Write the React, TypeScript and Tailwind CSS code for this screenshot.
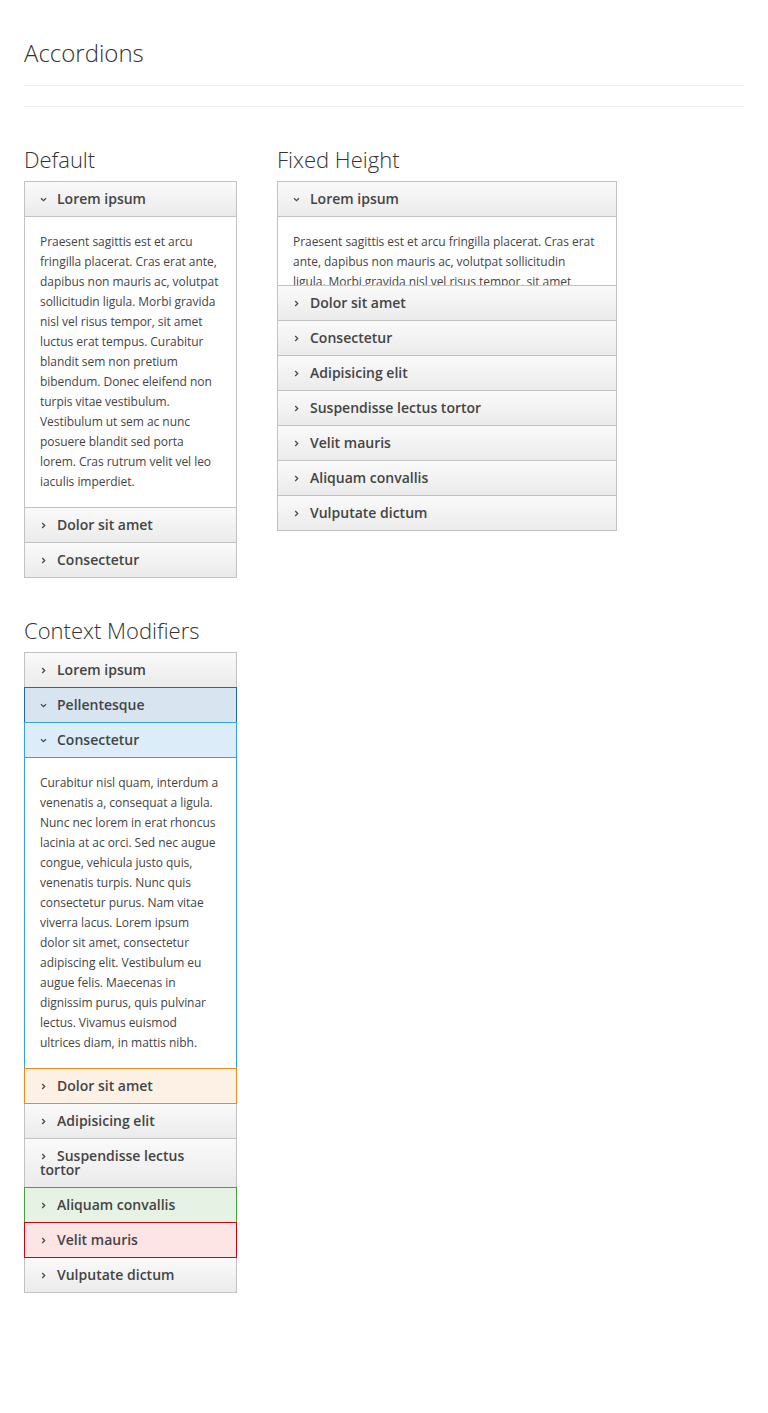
import React from "react";

type Variant = "default" | "primary" | "info" | "warning" | "success" | "danger";

const headerCls: Record<Variant, string> = {
  default: "border-[#c2c2c2] bg-gradient-to-b from-[#fafafa] to-[#ebebeb]",
  primary: "border-[#1f6aa8] bg-[#d9e4f1] relative z-10",
  info: "border-[#34a4e0] bg-[#dcedf9] relative z-10",
  warning: "border-[#f0891c] bg-[#fdf1e5] relative z-10",
  success: "border-[#46a33a] bg-[#e6f2e3] relative z-10",
  danger: "border-[#d6000f] bg-[#fde5e5] relative z-10",
};

const contentCls: Record<Variant, string> = {
  default: "border-[#c2c2c2]",
  primary: "border-[#1f6aa8]",
  info: "border-[#34a4e0] relative z-10",
  warning: "border-[#f0891c]",
  success: "border-[#46a33a]",
  danger: "border-[#d6000f]",
};

function Chevron({ open }: { open: boolean }) {
  return (
    <svg
      width="7"
      height="7"
      viewBox="0 0 7 7"
      className="inline-block mr-[10px] align-[1px]"
      fill="none"
      stroke="#4a4a4a"
      strokeWidth="1.3"
    >
      {open ? <path d="M1 2.2 L3.5 4.7 L6 2.2" /> : <path d="M2.2 1 L4.7 3.5 L2.2 6" />}
    </svg>
  );
}

type Item = { title: string; open?: boolean; variant?: Variant; content?: string };

function Accordion({ items, width, fixed }: { items: Item[]; width: string; fixed?: boolean }) {
  return (
    <div className={`${width} flex flex-col`}>
      {items.map((it, i) => {
        const v = it.variant ?? "default";
        return (
          <div key={i} className={i === 0 ? "" : "-mt-px"}>
            <div
              className={`border px-[15px] py-[10px] text-[14px] leading-[14px] font-semibold text-[#444] ${headerCls[v]}`}
            >
              <Chevron open={!!it.open} />
              {it.title}
            </div>
            {it.open && it.content && (
              <div
                className={`border-x border-b bg-white pl-[15px] pr-[17px] ${fixed ? "h-[69px] overflow-hidden pt-[15px]" : "py-[15px]"} text-[12px] leading-[20px] tracking-[-0.04px] text-[#444] ${contentCls[v]}`}
              >
                {it.content}
              </div>
            )}
          </div>
        );
      })}
    </div>
  );
}

const text1 =
  "Praesent sagittis est et arcu fringilla placerat. Cras erat ante, dapibus non mauris ac, volutpat sollicitudin ligula. Morbi gravida nisl vel risus tempor, sit amet luctus erat tempus. Curabitur blandit sem non pretium bibendum. Donec eleifend non turpis vitae vestibulum. Vestibulum ut sem ac nunc posuere blandit sed porta lorem. Cras rutrum velit vel leo iaculis imperdiet.";

const text2 =
  "Curabitur nisl quam, interdum a venenatis a, consequat a ligula. Nunc nec lorem in erat rhoncus lacinia at ac orci. Sed nec augue congue, vehicula justo quis, venenatis turpis. Nunc quis consectetur purus. Nam vitae viverra lacus. Lorem ipsum dolor sit amet, consectetur adipiscing elit. Vestibulum eu augue felis. Maecenas in dignissim purus, quis pulvinar lectus. Vivamus euismod ultrices diam, in mattis nibh.";

export default function App() {
  return (
    <div
      className="min-h-[1413px] bg-white px-6 pt-[37px] text-[#333]"
      style={{ fontFamily: '"Open Sans", "Noto Sans", sans-serif' }}
    >
      <h1 className="text-[24px] leading-[32px] font-light text-[#333] pb-4 border-b border-[#eeeeee]">
        Accordions
      </h1>
      <div className="mt-5 border-t border-[#eeeeee]" />

      <div className="mt-[39px] flex gap-[40px] items-start">
        <div>
          <h2 className="text-[22px] leading-[26px] font-light text-[#333] mb-[9px]">Default</h2>
          <Accordion
            width="w-[213px]"
            items={[
              { title: "Lorem ipsum", open: true, content: text1 },
              { title: "Dolor sit amet" },
              { title: "Consectetur" },
            ]}
          />
        </div>
        <div>
          <h2 className="text-[22px] leading-[26px] font-light text-[#333] mb-[9px]">Fixed Height</h2>
          <Accordion
            width="w-[340px]"
            fixed
            items={[
              { title: "Lorem ipsum", open: true, content: text1 },
              { title: "Dolor sit amet" },
              { title: "Consectetur" },
              { title: "Adipisicing elit" },
              { title: "Suspendisse lectus tortor" },
              { title: "Velit mauris" },
              { title: "Aliquam convallis" },
              { title: "Vulputate dictum" },
            ]}
          />
        </div>
      </div>

      <div className="mt-[39px]">
        <h2 className="text-[22px] leading-[26px] font-light text-[#333] mb-[9px]">Context Modifiers</h2>
        <Accordion
          width="w-[213px]"
          items={[
            { title: "Lorem ipsum" },
            { title: "Pellentesque", open: true, variant: "primary" },
            { title: "Consectetur", open: true, variant: "info", content: text2 },
            { title: "Dolor sit amet", variant: "warning" },
            { title: "Adipisicing elit" },
            { title: "Suspendisse lectus tortor" },
            { title: "Aliquam convallis", variant: "success" },
            { title: "Velit mauris", variant: "danger" },
            { title: "Vulputate dictum" },
          ]}
        />
      </div>
    </div>
  );
}
